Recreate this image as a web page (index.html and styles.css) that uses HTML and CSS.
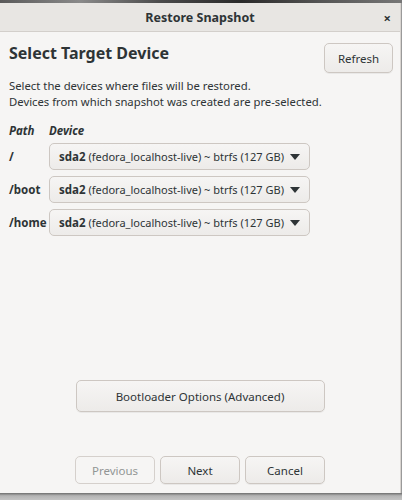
FILE: index.html
```html
<!DOCTYPE html>
<html>
<head>
<meta charset="utf-8">
<link rel="stylesheet" href="styles.css">
</head>
<body>
<div class="screen">
  <div class="strip"></div>
  <div class="window">
    <div class="titlebar">
      <span class="title">Restore Snapshot</span>
      <span class="close">×</span>
    </div>
    <div class="content">
      <div class="header">
        <h1>Select Target Device</h1>
        <button class="btn refresh">Refresh</button>
      </div>
      <p class="desc">Select the devices where files will be restored.<br>Devices from which snapshot was created are pre-selected.</p>
      <div class="table">
        <div class="th">Path</div>
        <div class="th">Device</div>
        <div class="path">/</div>
        <div class="combo"><span><b>sda2</b> (fedora_localhost-live) ~ btrfs (127 GB)</span><i class="arrow"></i></div>
        <div class="path">/boot</div>
        <div class="combo"><span><b>sda2</b> (fedora_localhost-live) ~ btrfs (127 GB)</span><i class="arrow"></i></div>
        <div class="path">/home</div>
        <div class="combo"><span><b>sda2</b> (fedora_localhost-live) ~ btrfs (127 GB)</span><i class="arrow"></i></div>
      </div>
      <div class="spacer"></div>
      <div class="center">
        <button class="btn boot">Bootloader Options (Advanced)</button>
      </div>
      <div class="actions">
        <button class="btn act disabled">Previous</button>
        <button class="btn act">Next</button>
        <button class="btn act">Cancel</button>
      </div>
    </div>
  </div>
  <div class="shadow"></div>
</div>
</body>
</html>
```
FILE: styles.css
```css
* { box-sizing: border-box; }
html, body { margin: 0; padding: 0; }
body {
  width: 402px;
  height: 500px;
  overflow: hidden;
  font-family: "Noto Sans", "Open Sans", sans-serif;
  color: #2e3436;
  background: #9a9a9a;
}
.screen { display: flex; flex-direction: column; height: 500px; }
.strip {
  height: 3px;
  background: linear-gradient(90deg, #5a5a5a 0%, #8a8a8a 20%, #4a4a4a 40%, #2a2a2a 60%, #555 80%, #777 100%);
}
.window {
  height: 490px;
  background: #f6f5f4;
  border-right: 1px solid #d8d4d0;
  width: 401px;
  display: flex;
  flex-direction: column;
}
.titlebar {
  height: 29px;
  background: #e8e6e3;
  border-bottom: 1px solid #d3cfcb;
  display: flex;
  align-items: center;
  justify-content: center;
  position: relative;
}
.title { font-weight: bold; font-size: 12.5px; color: #2e3436; }
.close {
  position: absolute;
  right: 9px;
  top: 6px;
  font-size: 13px;
  font-weight: bold;
  color: #2e3436;
}
.content {
  flex: 1;
  display: flex;
  flex-direction: column;
  padding: 10px 7px 9px 9px;
}
.header {
  display: flex;
  justify-content: space-between;
  align-items: flex-start;
  height: 30px;
  margin-top: 1px;
}
h1 {
  margin: -1px 0 0 0;
  font-size: 16px;
  line-height: 22px;
  font-weight: bold;
  color: #2e3436;
}
.btn {
  font-family: inherit;
  font-size: 11.5px;
  color: #2e3436;
  background: linear-gradient(#f6f5f4, #edebe9);
  border: 1px solid #cdc7c2;
  border-radius: 5px;
  box-shadow: 0 1px rgba(0,0,0,0.05);
  padding: 0;
}
.refresh { width: 69px; height: 30px; }
.desc {
  margin: 5px 0 0 0;
  font-size: 11.3px;
  line-height: 16px;
}
.table {
  margin-top: 13px;
  display: grid;
  grid-template-columns: 40px 261px;
  row-gap: 6px;
  align-items: center;
}
.th {
  font-style: italic;
  font-weight: bold;
  font-size: 11.5px;
  line-height: 16px;
  margin-bottom: -2px;
}
.path { font-weight: bold; font-size: 11.5px; }
.combo {
  height: 27px;
  border: 1px solid #cdc7c2;
  border-radius: 5px;
  background: linear-gradient(#f6f5f4, #edebe9);
  display: flex;
  align-items: center;
  gap: 4px;
  padding: 0 9px 0 9px;
  font-size: 11px;
  white-space: nowrap;
}
.combo span { flex: 1; }
.combo b { font-weight: bold; font-size: 11.5px; }
.arrow {
  flex: none;
  width: 0; height: 0;
  border-left: 5px solid transparent;
  border-right: 5px solid transparent;
  border-top: 6px solid #2e3436;
}
.spacer { flex: 1; }
.center { display: flex; justify-content: center; padding-right: 2px; }
.boot { width: 249px; height: 32px; }
.actions {
  margin-top: 44px;
  display: flex;
  justify-content: center;
  gap: 5px;
  padding-right: 2px;
}
.act { width: 80px; height: 28px; }
.disabled { color: #929595; background: #f6f5f4; border-color: #d5d0cc; box-shadow: none; }
.shadow {
  flex: 1;
  background: linear-gradient(#6e6e6e, #b4b4b4 40%, #c4c4c4);
}
```
